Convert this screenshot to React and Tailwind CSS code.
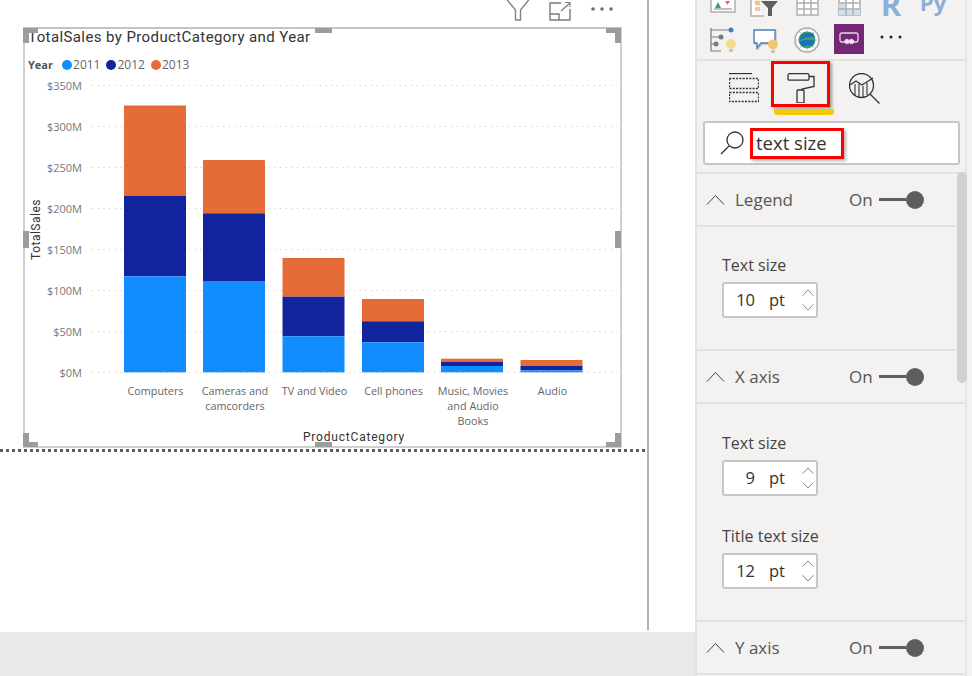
const gridLines = [85.5, 126.5, 167.5, 208.5, 249.5, 290.5, 331.5, 372.5];
const yLabels = ["$350M", "$300M", "$250M", "$200M", "$150M", "$100M", "$50M", "$0M"];

const bars = [
  { x: 124, top: 105.5, navy: 195.7, blue: 276.3 },
  { x: 203, top: 160, navy: 213.3, blue: 281 },
  { x: 282.5, top: 258, navy: 296.7, blue: 336.3 },
  { x: 362, top: 299, navy: 321.3, blue: 342.3 },
  { x: 441, top: 358.7, navy: 362, blue: 366 },
  { x: 520.5, top: 360, navy: 366, blue: 370.3 },
];

const categories = [
  { x: 155.5, lines: ["Computers"] },
  { x: 235, lines: ["Cameras and", "camcorders"] },
  { x: 314.5, lines: ["TV and Video"] },
  { x: 393.5, lines: ["Cell phones"] },
  { x: 473, lines: ["Music, Movies", "and Audio", "Books"] },
  { x: 552.5, lines: ["Audio"] },
];

function Chart() {
  return (
    <svg viewBox="25 78 594 352" className="w-[594px] h-[352px] shrink-0 font-['Open_Sans',sans-serif]">
      {gridLines.map((y) => (
        <line key={y} x1="92" x2="617" y1={y} y2={y} stroke="#c8c8c8" strokeWidth="1" strokeDasharray="1 4.7" />
      ))}
      {yLabels.map((t, i) => (
        <text key={t} x="82" y={gridLines[i] + 4} textAnchor="end" fontSize="11" fill="#777">{t}</text>
      ))}
      {bars.map((b) => (
        <g key={b.x}>
          <rect x={b.x} y={b.top} width="62" height={b.navy - b.top} fill="#E66C37" />
          <rect x={b.x} y={b.navy} width="62" height={b.blue - b.navy} fill="#12239E" />
          <rect x={b.x} y={b.blue} width="62" height={372.3 - b.blue} fill="#118DFF" />
        </g>
      ))}
      {categories.map((c) =>
        c.lines.map((l, i) => (
          <text key={l} x={c.x} y={395 + i * 15} textAnchor="middle" fontSize="10.8" fill="#666">{l}</text>
        ))
      )}
      <text
        transform="translate(40 229.5) rotate(-90)"
        textAnchor="middle"
        fontSize="12"
        letterSpacing="0.5"
        fill="#333"
        className="font-['Roboto',sans-serif]"
      >
        TotalSales
      </text>
    </svg>
  );
}

function Handles() {
  const c = "absolute bg-[#9c9c9c]";
  return (
    <>
      {/* corners */}
      <div className={`${c} -left-[2px] -top-[1px] w-[15px] h-[5px]`} />
      <div className={`${c} -left-[2px] -top-[1px] w-[6px] h-[15px]`} />
      <div className={`${c} -right-[1px] -top-[1px] w-[15px] h-[5px]`} />
      <div className={`${c} -right-[1px] -top-[1px] w-[6px] h-[15px]`} />
      <div className={`${c} -left-[2px] -bottom-[1px] w-[15px] h-[5px]`} />
      <div className={`${c} -left-[2px] -bottom-[1px] w-[6px] h-[14px]`} />
      <div className={`${c} -right-[1px] -bottom-[1px] w-[15px] h-[5px]`} />
      <div className={`${c} -right-[1px] -bottom-[1px] w-[6px] h-[14px]`} />
      {/* edge middles */}
      <div className={`${c} left-[290px] -top-[1px] w-[17px] h-[5px]`} />
      <div className={`${c} left-[290px] -bottom-[1px] w-[17px] h-[5px]`} />
      <div className={`${c} -left-[2px] top-[202px] w-[6px] h-[17px]`} />
      <div className={`${c} -right-[1px] top-[202px] w-[6px] h-[17px]`} />
    </>
  );
}

function VisualHeaderIcons() {
  return (
    <div className="h-[27px] flex justify-end items-start gap-[19px] pr-[33px]">
      <svg viewBox="0 0 24 21" className="w-[24px] h-[21px]" fill="none" stroke="#85827f" strokeWidth="1.4">
        <path d="M0.5 -1 L9.5 10 V20 H14.5 V10 L23.5 -1" />
      </svg>
      <svg viewBox="0 0 22 20" className="w-[22px] h-[20px] mt-[1px]" fill="none" stroke="#7d7b79" strokeWidth="1.4">
        <path d="M12 2 H1 V19 H21 V8" />
        <path d="M1 13 H10 V19" />
        <path d="M12 10 L21 2 M16 1.5 H21 V6" strokeWidth="1.1" />
      </svg>
      <svg viewBox="0 0 24 6" className="w-[24px] h-[6px] mt-[6px]" fill="#6d6d6d">
        <circle cx="3" cy="3" r="1.8" />
        <circle cx="12" cy="3" r="1.8" />
        <circle cx="21" cy="3" r="1.8" />
      </svg>
    </div>
  );
}

function Canvas() {
  return (
    <div className="w-[649px] h-[630px] border-r-2 border-[#b3b0ad] flex flex-col">
      <VisualHeaderIcons />
      <div className="relative ml-[23px] w-[599px] h-[421px] shrink-0 border-2 border-[#d0d0d0] border-t-[#c4c4c4] flex flex-col">
        <Handles />
        <div className="pl-[3px] pt-[1px] h-[22px] leading-[15px] text-[15px] tracking-[0.4px] text-[#333] font-['Roboto',sans-serif] whitespace-nowrap">
          TotalSales by ProductCategory and Year
        </div>
        <div className="mt-[3px] mb-[2px] h-[22px] pl-[3px] flex items-center gap-[1px] text-[12px] text-[#666] font-['Open_Sans',sans-serif]">
          <span className="font-bold text-[11px] text-[#555] mr-[8px]">Year</span>
          <span className="w-[10px] h-[10px] rounded-full bg-[#118DFF]" />
          <span className="mr-[5px]">2011</span>
          <span className="w-[10px] h-[10px] rounded-full bg-[#12239E]" />
          <span className="mr-[5px]">2012</span>
          <span className="w-[10px] h-[10px] rounded-full bg-[#E66C37]" />
          <span>2013</span>
        </div>
        <Chart />
        <div className="pl-[63px] text-center text-[12px] leading-[15px] tracking-[0.8px] text-[#333] font-['Roboto',sans-serif]">
          ProductCategory
        </div>
      </div>
      <div className="mt-[1px] w-[645px] h-[3px] bg-[repeating-linear-gradient(90deg,#5c5c5c_0_3px,transparent_3px_6px)]" />
    </div>
  );
}

function Chevron({ up, className }) {
  return (
    <svg viewBox="0 0 19 11" className={className} fill="none" stroke="#444" strokeWidth="1">
      <path d={up ? "M1 10.5 L9.5 1.5 L18 10.5" : "M1 0.5 L9.5 9.5 L18 0.5"} />
    </svg>
  );
}

function SectionHeader({ label }) {
  return (
    <div className="h-[55px] shrink-0 border-y-2 border-[#e3e2e0] flex items-center pl-[9px]">
      <Chevron up className="w-[19px] h-[11px] mr-[10px]" />
      <span className="w-[114px] text-[17px] text-[#555]">{label}</span>
      <span className="w-[30px] text-[17px] text-[#555]">On</span>
      <div className="w-[27px] h-[3px] bg-[#605e5c]" />
      <div className="w-[18px] h-[18px] rounded-full bg-[#605e5c]" />
    </div>
  );
}

function SizeField({ label, value, className }) {
  return (
    <div className={className}>
      <div className="h-[24px] leading-[24px] text-[16px] text-[#444]">{label}</div>
      <div className="mt-[5px] w-[96px] h-[36px] bg-white border-2 border-[#c8c6c4] rounded-[3px] flex items-center text-[16.5px] text-[#333]">
        <span className="w-[31px] text-right">{value}</span>
        <span className="ml-[14px]">pt</span>
        <div className="ml-auto mr-[1px] flex flex-col gap-[8px]">
          <Chevron up className="w-[14px] h-[7px]" />
          <Chevron className="w-[14px] h-[7px]" />
        </div>
      </div>
    </div>
  );
}

function VisualizationIcons() {
  return (
    <div className="h-[61px] shrink-0 border-b-2 border-[#e3e2e0] pl-[5px] grid grid-cols-[repeat(6,42px)] grid-rows-[24px_30px] justify-items-center items-start">
      <svg viewBox="0 0 26 13" className="w-[26px] h-[13px]">
        <path d="M1 -2 V12 H25 V-2" fill="#fff" stroke="#b3b0ad" strokeWidth="1.5" />
        <path d="M8 2 L11 8 H5 Z" fill="#3f9e78" />
        <path d="M15 1 H20 L17.5 5 Z" fill="#d9695f" />
        <path d="M4 9 H22" stroke="#aaa" strokeWidth="1.5" />
      </svg>
      <svg viewBox="0 0 30 17" className="w-[30px] h-[17px]">
        <path d="M1 -2 V16 H14" fill="#fff" stroke="#b3b0ad" strokeWidth="1.5" />
        <rect x="5" y="1" width="5" height="4" fill="#f2c27e" />
        <rect x="5" y="7" width="5" height="4" fill="#f3c3b8" />
        <path d="M11 1 H28 L22 8 V16 H18 V8 Z" fill="#605e5c" />
      </svg>
      <svg viewBox="0 0 23 16" className="w-[23px] h-[16px]" fill="#fff" stroke="#b3b0ad" strokeWidth="1.5">
        <rect x="1" y="-3" width="21" height="18" />
        <path d="M8 -3 V15 M15 -3 V15 M1 3 H22 M1 9 H22" fill="none" />
      </svg>
      <svg viewBox="0 0 23 16" className="w-[23px] h-[16px]" stroke="#b3b0ad" strokeWidth="1.5">
        <rect x="1" y="-3" width="21" height="18" fill="#fff" />
        <rect x="1" y="9" width="21" height="6" fill="#cfe0ee" stroke="none" />
        <rect x="1" y="3" width="7" height="6" fill="#cfe0ee" stroke="none" />
        <path d="M8 -3 V15 M15 -3 V15 M1 3 H22 M1 9 H22" fill="none" />
      </svg>
      <span className="-mt-[8px] leading-[24px] text-[31px] font-bold text-[#8ab0d8] font-['Open_Sans',sans-serif]">R</span>
      <span className="-mt-[10px] leading-[24px] text-[22px] font-bold text-[#8ab0d8] font-['Open_Sans',sans-serif]">Py</span>

      <svg viewBox="0 0 26 26" className="w-[26px] h-[26px] mt-[3px]" fill="none">
        <path d="M1 1 V24 H11 M1 3 H20 M1 10 H10 M1 17 H6" stroke="#7a7a7a" strokeWidth="1.2" />
        <circle cx="21" cy="3" r="2.5" fill="#3f7fbf" />
        <circle cx="11" cy="10" r="2.5" fill="#7a7a7a" />
        <circle cx="6" cy="17" r="2.5" fill="#7a7a7a" />
        <circle cx="21" cy="17" r="5" fill="#f5d98c" />
        <rect x="19" y="22" width="4" height="3" fill="#c8c6c4" />
      </svg>
      <svg viewBox="0 0 27 26" className="w-[27px] h-[26px] mt-[4px]" fill="none">
        <path d="M3 3 H24 V16 H10 L6 21 V16 H3 Z" stroke="#c8c6c4" strokeWidth="1.4" />
        <path d="M2 2 H23 V15 H9 L5 20 V15 H2 Z" fill="#fff" stroke="#4a7ebb" strokeWidth="1.4" />
        <circle cx="21" cy="16.5" r="5" fill="#f2c76b" />
        <rect x="19" y="22" width="4" height="3" fill="#c8c6c4" />
      </svg>
      <svg viewBox="0 0 26 26" className="w-[26px] h-[26px] mt-[3px]" fill="none">
        <circle cx="13" cy="13" r="12" fill="#fff" stroke="#a9a9a9" strokeWidth="1.5" />
        <path d="M2 13 H24 M13 1 V25 M5 5 Q13 10 21 5 M5 21 Q13 16 21 21" stroke="#c4c4c4" strokeWidth="0.8" />
        <circle cx="13" cy="13" r="8.5" fill="#3aa55f" />
        <path d="M7 8 Q13 5 19 6 L21 10 Q13 9 6 13 Z M5 15 Q13 11 21 14 L18 19 Q13 17 9 20 Z" fill="#1c6fc4" />
      </svg>
      <div className="w-[30px] h-[30px] bg-[#742774] flex items-center justify-center">
        <svg viewBox="0 0 20 14" className="w-[20px] h-[14px]" fill="none" stroke="#e8d8e8" strokeWidth="1.3">
          <path d="M6 10 H3 Q1 10 1 8 V3 Q1 1 3 1 H17 Q19 1 19 3 V8 Q19 10 17 10 H14" />
          <circle cx="8" cy="9.5" r="2.2" fill="#f3e9f3" strokeDasharray="1 0.6" />
          <circle cx="12.5" cy="9.5" r="2.2" fill="#f3e9f3" strokeDasharray="1 0.6" />
        </svg>
      </div>
      <svg viewBox="0 0 22 4" className="w-[22px] h-[4px] mt-[11px]" fill="#222">
        <circle cx="2" cy="2" r="1.5" />
        <circle cx="11" cy="2" r="1.5" />
        <circle cx="20" cy="2" r="1.5" />
      </svg>
    </div>
  );
}

function Tabs() {
  return (
    <div className="h-[54px] shrink-0 flex items-start pl-[32px]">
      <svg viewBox="0 0 30 30" className="w-[30px] h-[30px] mt-[12px]" fill="none" stroke="#333" strokeWidth="1.3">
        <path d="M0 0.5 H23" />
        <rect x="0.5" y="5.5" width="29" height="10" strokeDasharray="2 1.3" />
        <rect x="0.5" y="19.5" width="29" height="9" strokeDasharray="2 1.3" />
      </svg>
      <div className="ml-[12px] w-[63px] flex flex-col">
        <div className="w-[59px] h-[46px] border-[3px] border-[#f00] shadow-[2px_2px_3px_rgba(0,0,0,0.35)] flex items-center justify-center">
          <svg viewBox="0 0 28 30" className="w-[28px] h-[30px] mt-[8px]" fill="none" stroke="#333" strokeWidth="1.3">
            <rect x="1" y="0.7" width="21" height="6.5" rx="1.5" />
            <path d="M22 3.5 H27 V13.5 L15 16 V17" />
            <rect x="10" y="17" width="7" height="13" rx="1" />
          </svg>
        </div>
        <div className="mt-[2px] ml-[3px] w-[60px] h-[6px] bg-[#f2c811] rounded-b-[3px]" />
      </div>
      <svg viewBox="0 0 31 31" className="ml-[15px] w-[31px] h-[31px] mt-[12px]" fill="none" stroke="#333" strokeWidth="1.3">
        <circle cx="12.5" cy="12.5" r="12" />
        <path d="M1 12 L7 8 L13 12 L24 5" />
        <path d="M6 11 V23 M10 11 V24 M14 13 V24 M18 10 V22" strokeWidth="1.1" />
        <path d="M21 21 L30.5 30.5" />
      </svg>
    </div>
  );
}

function Search() {
  return (
    <div className="mt-[6px] ml-[6px] w-[257px] h-[44px] shrink-0 bg-white border-2 border-[#c8c6c4] rounded-[3px] flex items-center pl-[15px]">
      <svg viewBox="0 0 24 24" className="w-[24px] h-[24px]" fill="none" stroke="#333" strokeWidth="1.3">
        <circle cx="15" cy="9" r="8" />
        <path d="M9 15 L1 23" />
      </svg>
      <div className="ml-[6px] w-[94px] h-[31px] border-[3px] border-[#f00] shadow-[2px_2px_3px_rgba(0,0,0,0.3)] flex items-center pl-[3px] text-[18.5px] text-[#333] whitespace-nowrap">
        text size
      </div>
    </div>
  );
}

function FormatPanel() {
  return (
    <div className="relative w-[277px] shrink-0 h-full border-l-2 border-[#e3e2e0] bg-[#f3f2f1] font-['Open_Sans',sans-serif]">
      <div className="w-[270px] h-full border-r-2 border-[#e8e7e5] flex flex-col overflow-hidden">
        <VisualizationIcons />
        <Tabs />
        <Search />
        <div className="h-[7px] shrink-0" />
        <SectionHeader label="Legend" />
        <div className="h-[122px] shrink-0 pl-[25px] pt-[26px]">
          <SizeField label="Text size" value="10" />
        </div>
        <SectionHeader label="X axis" />
        <div className="h-[216px] shrink-0 pl-[25px] pt-[27px]">
          <SizeField label="Text size" value="9" />
          <SizeField label="Title text size" value="12" className="mt-[28px]" />
        </div>
        <SectionHeader label="Y axis" />
      </div>
      {/* scrollbar thumb */}
      <div className="absolute top-[172px] left-[260px] w-[10px] h-[211px] rounded-[5px] bg-[#d2d0ce]" />
    </div>
  );
}

export default function App() {
  return (
    <div className="w-[972px] h-[676px] flex overflow-hidden bg-white">
      <div className="w-[695px] shrink-0 h-full flex flex-col">
        <Canvas />
        <div className="h-[2px]" />
        <div className="h-[44px] bg-[#e9e9e9]" />
      </div>
      <FormatPanel />
    </div>
  );
}
